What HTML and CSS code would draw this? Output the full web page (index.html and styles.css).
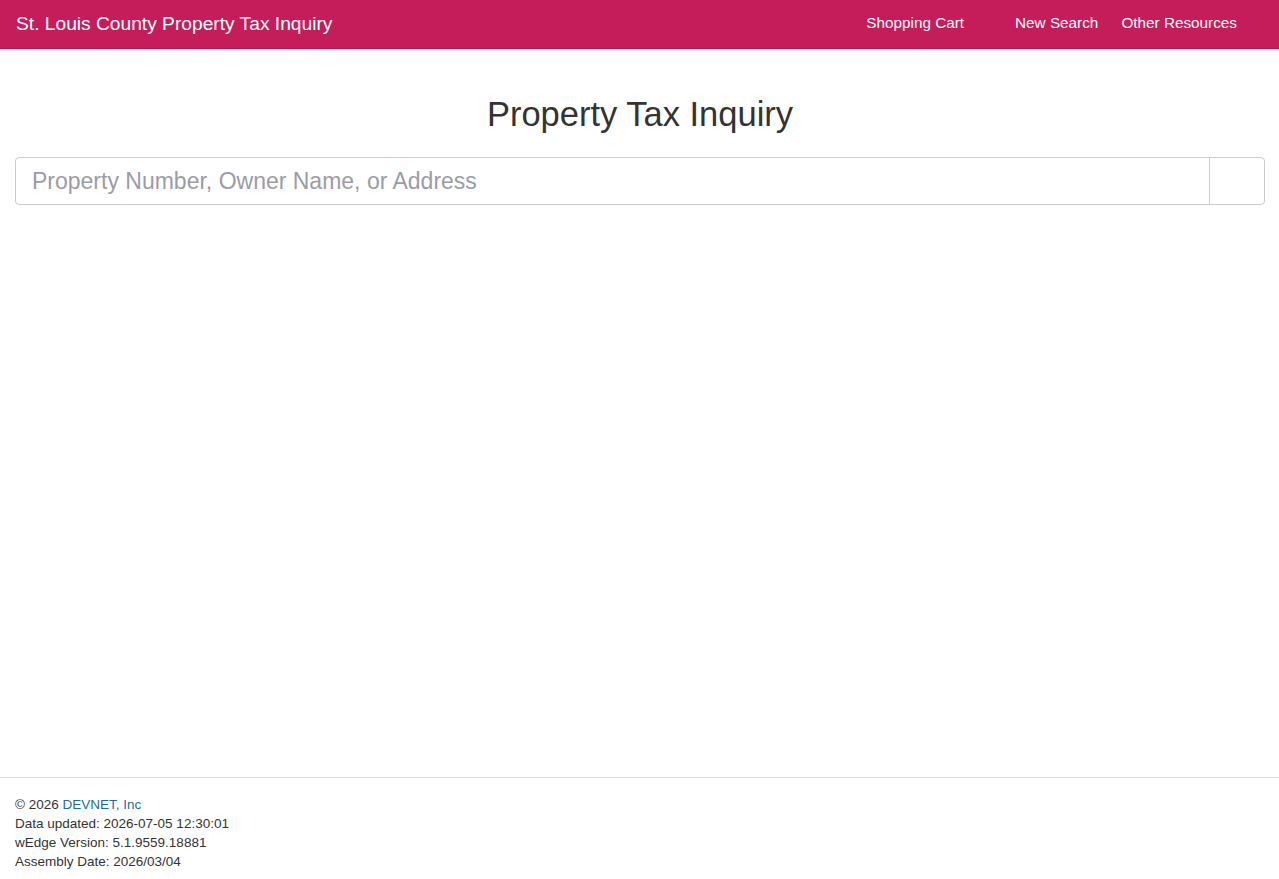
FILE: index.html
```html
<!DOCTYPE html>
<html lang="en">
<head>
    <meta charset="UTF-8">
    <meta name="viewport" content="width=device-width, initial-scale=1.0">
    <title>St. Louis County Property Tax Inquiry</title>
    <link rel="stylesheet" href="styles.css">
</head>
<body>
    <nav class="navbar">
        <a class="brand" href="#">St. Louis County Property Tax Inquiry</a>
        <ul class="nav-links">
            <li class="cart"><a href="#">Shopping Cart</a></li>
            <li><a href="#">New Search</a></li>
            <li><a href="#">Other Resources</a></li>
        </ul>
    </nav>

    <main class="content">
        <h1>Property Tax Inquiry</h1>
        <div class="search-group">
            <input type="text" class="search-input" placeholder="Property Number, Owner Name, or Address">
            <span class="search-addon"></span>
        </div>
    </main>

    <footer class="footer">
        <div>&copy; 2026 <a href="#">DEVNET, Inc</a></div>
        <div>Data updated: 2026-07-05 12:30:01</div>
        <div>wEdge Version: 5.1.9559.18881</div>
        <div>Assembly Date: 2026/03/04</div>
    </footer>
</body>
</html>
```

FILE: styles.css
```css
html, body {
    margin: 0;
    padding: 0;
}
body {
    font-family: "Liberation Sans", Arial, sans-serif;
    font-size: 14px;
    color: #333;
    background: #fff;
    min-height: 100vh;
    display: flex;
    flex-direction: column;
}
a {
    text-decoration: none;
}

.navbar {
    background: #c41d59;
    height: 49px;
    display: flex;
    align-items: center;
    justify-content: space-between;
    padding: 0 15px 0 16px;
    border-bottom: 1px solid #b01a50;
    box-sizing: border-box;
}
.brand {
    color: #fff;
    font-size: 19.2px;
}
.nav-links {
    list-style: none;
    margin: 0;
    padding: 0 16px 0 0;
    display: flex;
}
.nav-links li a {
    color: #fff;
    font-size: 15.3px;
    display: block;
    padding: 0 11px 2px 12px;
}
.nav-links li.cart a {
    margin-right: 28px;
}

.content {
    flex: 1;
    padding: 0 14px 0 15px;
}
h1 {
    font-weight: normal;
    font-size: 34.5px;
    text-align: center;
    margin: 46px 0 23px;
    color: #333;
}
.search-group {
    display: flex;
    height: 48px;
    border: 1px solid #ccc;
    border-radius: 4px;
    box-sizing: border-box;
}
.search-input {
    flex: 1;
    border: none;
    outline: none;
    padding: 0 16px;
    font-family: inherit;
    font-size: 23px;
    color: #555;
    background: transparent;
    border-radius: 4px 0 0 4px;
}
.search-input::placeholder {
    color: #9a9da5;
}
.search-addon {
    width: 54px;
    border-left: 1px solid #ccc;
}

.footer {
    border-top: 1px solid #ddd;
    padding: 17px 15px 8px;
    font-size: 13.5px;
    line-height: 19px;
    color: #333;
}
.footer a {
    color: #1f6c9e;
}
```
